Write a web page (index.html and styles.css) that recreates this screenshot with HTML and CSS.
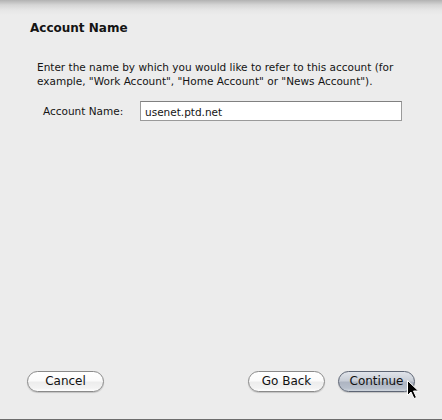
FILE: index.html
```html
<!DOCTYPE html>
<html>
<head>
<meta charset="utf-8">
<link rel="stylesheet" href="styles.css">
</head>
<body>
<div class="window">
  <h1 class="title">Account Name</h1>
  <p class="desc">Enter the name by which you would like to refer to this account (for example, "Work Account", "Home Account" or "News Account").</p>
  <div class="field">
    <label class="label">Account Name:</label>
    <div class="input">usenet.ptd.net</div>
  </div>
  <div class="spacer"></div>
  <div class="footer">
    <button class="btn">Cancel</button>
    <div class="right">
      <button class="btn">Go Back</button>
      <button class="btn primary">Continue</button>
    </div>
  </div>
  <svg class="cursor" width="14" height="21" viewBox="0 0 14 21">
    <path d="M1.5 1.5 L1.5 16.5 L5 13 L8 19.5 L10.5 18.5 L7.5 12 L12.5 12 Z" fill="#000" stroke="#fff" stroke-width="1" stroke-linejoin="round"/>
  </svg>
</div>
</body>
</html>
```
FILE: styles.css
```css
html, body {
  margin: 0;
  padding: 0;
  background: #ececec;
}
.window {
  position: relative;
  width: 442px;
  height: 420px;
  box-sizing: border-box;
  display: flex;
  flex-direction: column;
  background: linear-gradient(#b2b2b2 0px, #d6d6d6 5px, #e6e6e6 10px, #ececec 15px, #ececec 100%);
  border-bottom: 1px solid #6c6c6c;
  font-family: "DejaVu Sans", "Verdana", sans-serif;
  color: #141414;
}
.title {
  margin: 21px 0 0 30px;
  font-size: 12px;
  line-height: 15px;
  font-weight: bold;
}
.desc {
  margin: 24px 30px 0 37px;
  font-size: 10.5px;
  line-height: 14px;
}
.field {
  display: flex;
  align-items: center;
  margin: 13px 0 0 43px;
  height: 20px;
  font-size: 10.5px;
}
.label {
  width: 97px;
}
.input {
  box-sizing: border-box;
  width: 262px;
  height: 20px;
  background: #fff;
  border: 1px solid #9a9a9a;
  border-top-color: #808080;
  padding: 3px 0 0 4px;
  line-height: 14px;
}
.spacer {
  flex: 1;
}
.footer {
  display: flex;
  justify-content: space-between;
  padding: 0 27px 27px 27px;
}
.right {
  display: flex;
  gap: 13px;
}
.btn {
  box-sizing: border-box;
  width: 77px;
  height: 21px;
  border-radius: 11px;
  border: 1px solid #8a8a8a;
  background: linear-gradient(#ffffff 0%, #fbfbfb 45%, #ededed 55%, #f3f3f3 85%, #ffffff 100%);
  box-shadow: 0 1px 1px rgba(0,0,0,0.18);
  font-family: "DejaVu Sans", "Verdana", sans-serif;
  font-size: 12px;
  color: #111;
  padding: 0;
  line-height: 19px;
}
.primary {
  border-color: #5d6574;
  background: linear-gradient(#e0e4ea 0%, #c9ced7 45%, #aeb5c2 55%, #b7bfcb 85%, #d0d6de 100%);
}
.cursor {
  position: absolute;
  left: 406px;
  top: 379px;
}
```
